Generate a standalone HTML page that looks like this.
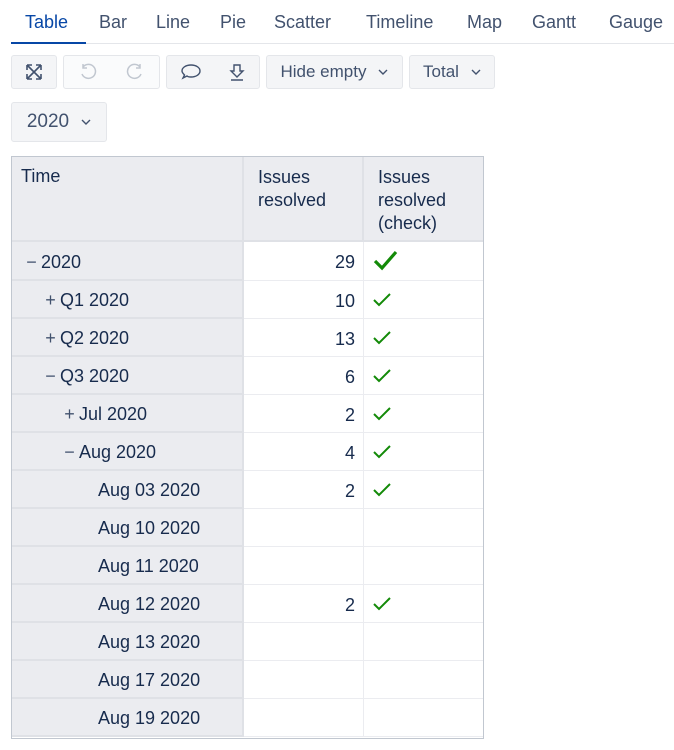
<!DOCTYPE html>
<html><head><style>
body{margin:0;background:#fff;font-family:"Liberation Sans",sans-serif;color:#172b4d;width:674px;height:750px;overflow:hidden;position:relative}
.tab{position:absolute;top:12px;font-size:18px;color:#42526e}
.btn{position:absolute;background:#f4f5f7;border:1px solid #e4e6ea;border-radius:3px;box-sizing:border-box;font-size:17px;color:#42526e;display:flex;align-items:center;justify-content:center}
.cell{position:absolute;box-sizing:border-box;font-size:18px}
.sg{display:inline-block;width:19px;color:#42526e;text-align:center}
</style></head><body>
<div class="tab" style="left:25px;color:#0747a6">Table</div>
<div class="tab" style="left:99px">Bar</div>
<div class="tab" style="left:156px">Line</div>
<div class="tab" style="left:220px">Pie</div>
<div class="tab" style="left:274px">Scatter</div>
<div class="tab" style="left:366px">Timeline</div>
<div class="tab" style="left:467px">Map</div>
<div class="tab" style="left:532px">Gantt</div>
<div class="tab" style="left:609px">Gauge</div>
<div style="position:absolute;left:11px;right:0;top:43px;height:1px;background:#e4e6ea"></div>
<div style="position:absolute;left:11px;width:75px;top:42px;height:2px;background:#0747a6"></div>

<div class="btn" style="left:11px;top:55px;width:46px;height:34px"><svg width="18" height="18" viewBox="0 0 18 18" fill="none" stroke="#42526e" stroke-width="1.6"><path d="M2 2L16 16M16 2L2 16M2 2h5M2 2v5M16 2h-5M16 2v5M2 16h5M2 16v-5M16 16h-5M16 16v-5"/></svg></div>
<div class="btn" style="left:63px;top:55px;width:97px;height:34px;background:#fafbfc;justify-content:space-around"><svg width="20" height="20" viewBox="0 0 20 20" fill="none" stroke="#c1c7d0" stroke-width="1.5"><path d="M5 5A7 7 0 1 1 4 12M5 2v4h4"/></svg><svg width="20" height="20" viewBox="0 0 20 20" fill="none" stroke="#c1c7d0" stroke-width="1.5"><path d="M15 5A7 7 0 1 0 16 12M15 2v4h-4"/></svg></div>
<div class="btn" style="left:166px;top:55px;width:94px;height:34px;justify-content:space-around"><svg width="22" height="20" viewBox="0 0 22 20" fill="none" stroke="#42526e" stroke-width="1.4"><path d="M11 3c5 0 9 2.5 9 6s-4 6-9 6c-1.5 0-3 0-4-1l-4 2 1.5-3C3 11.5 2 10.5 2 9c0-3.5 4-6 9-6z"/></svg><svg width="18" height="20" viewBox="0 0 18 20" fill="none" stroke="#42526e" stroke-width="1.4"><path d="M6 3h6v6h3l-6 6-6-6h3zM3 18h12"/></svg></div>
<div class="btn" style="left:266px;top:55px;width:137px;height:34px">Hide empty<svg style="margin-left:12px" width="10" height="6" viewBox="0 0 10 6"><path d="M1 1l4 4 4-4" fill="none" stroke="#42526e" stroke-width="1.4"/></svg></div>
<div class="btn" style="left:409px;top:55px;width:86px;height:34px">Total<svg style="margin-left:12px" width="10" height="6" viewBox="0 0 10 6"><path d="M1 1l4 4 4-4" fill="none" stroke="#42526e" stroke-width="1.4"/></svg></div>
<div class="btn" style="left:11px;top:102px;width:96px;height:40px;font-size:19px">2020<svg style="margin-left:12px" width="10" height="6" viewBox="0 0 10 6"><path d="M1 1l4 4 4-4" fill="none" stroke="#42526e" stroke-width="1.4"/></svg></div>

<div style="position:absolute;left:11px;top:156px;width:473px;height:583px;border:1px solid #c1c7d0;box-sizing:border-box"></div>
<div id="t"></div>
<script>
var rows=[["−","2020",0,"29",2],["+","Q1 2020",1,"10",1],["+","Q2 2020",1,"13",1],["−","Q3 2020",1,"6",1],["+","Jul 2020",2,"2",1],["−","Aug 2020",2,"4",1],["","Aug 03 2020",3,"2",1],["","Aug 10 2020",3,"",0],["","Aug 11 2020",3,"",0],["","Aug 12 2020",3,"2",1],["","Aug 13 2020",3,"",0],["","Aug 17 2020",3,"",0],["","Aug 19 2020",3,"",0]];
var h='';
function c(l,t,w,hh,bg,inner,st){h+='<div class="cell" style="left:'+l+'px;top:'+t+'px;width:'+w+'px;height:'+hh+'px;background:'+bg+';border-right:1px solid #c1c7d0;border-bottom:1px solid #dfe1e6;'+(st||'')+'">'+inner+'</div>';}
c(12,157,232,85,'#ebecf0','<div style="padding:9px 9px">Time</div>','border-right:2px solid #dfe1e6;border-bottom:2px solid #dfe1e6');
c(244,157,120,85,'#ebecf0','<div style="padding:9px 14px;line-height:23px">Issues<br>resolved</div>','border-right:2px solid #dfe1e6;border-bottom:2px solid #dfe1e6');
c(364,157,119,85,'#ebecf0','<div style="padding:9px 14px;line-height:23px">Issues<br>resolved<br>(check)</div>','border-bottom:2px solid #dfe1e6;border-right:none');
var y=242;
rows.forEach(function(r,i){var hh=i==0?39:38;
var ind=10+r[2]*19+(r[0]?0:19);
c(12,y,232,hh,'#ebecf0','<div style="position:absolute;left:'+ind+'px;top:50%;transform:translateY(-44%)">'+(r[0]?'<span class="sg">'+r[0]+'</span>':'')+r[1]+'</div>','border-right:2px solid #dfe1e6;border-bottom:2px solid #dfe1e6');
c(244,y,120,hh,'#fff','<div style="position:absolute;right:8px;top:50%;transform:translateY(-44%)">'+r[3]+'</div>','border-right:1px solid #ebecf0;border-bottom:1px solid #ebecf0');
var ck=r[4]==2?'<svg style="position:absolute;left:9px;top:7px" width="26" height="22" viewBox="0 0 26 22"><path d="M2 12l7 7L23 3" fill="none" stroke="#138a08" stroke-width="3.2"/></svg>':r[4]==1?'<svg style="position:absolute;left:9px;top:11px" width="18" height="15" viewBox="0 0 18 15"><path d="M1 8l5 5L17 2" fill="none" stroke="#138a08" stroke-width="2"/></svg>':'';
c(364,y,119,hh,'#fff',ck,'border-right:none;border-bottom:1px solid #ebecf0');
y+=hh;});
document.getElementById('t').innerHTML=h;
</script>
</body></html>
